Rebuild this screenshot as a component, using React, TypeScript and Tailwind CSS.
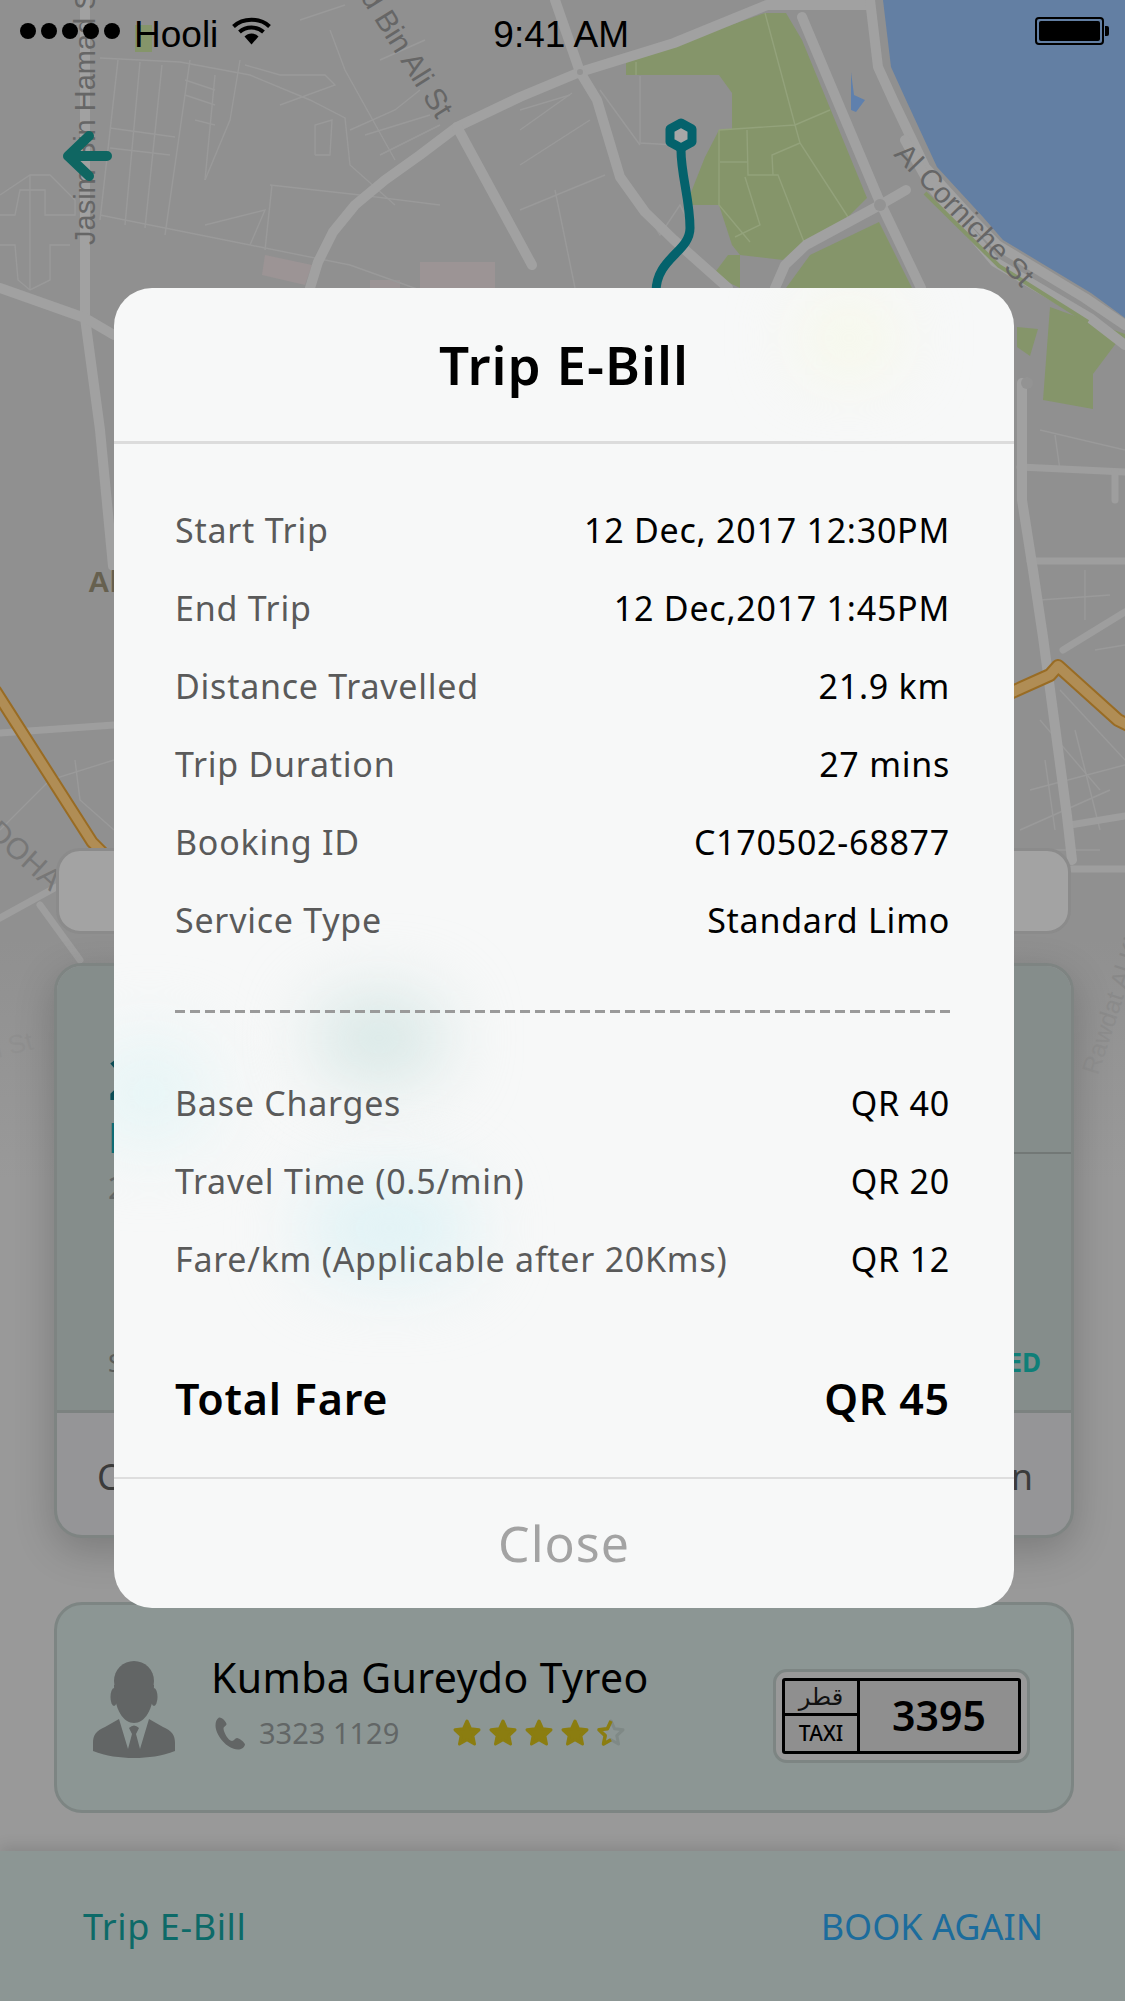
/* ── Map backdrop ───────────────────────────────────────────── */

const ROADS = [
  '85,0 85,270 85,318 100,430 113,566',
  '0,288 85,318 114,335',
  '310,288 318,262 333,232 355,205 385,180 420,155 457,127 520,97 580,72 674,43 767,5 867,5',
  '580,72 555,0',
  '580,72 597,100 620,177 645,212 674,240 728,288',
  '457,127 532,265',
  '802,17 879,200 921,288',
  '880,205 806,245 785,265 775,288',
  '880,205 906,190',
  '870,0 878,67 893,100 925,167 975,222 997,245 1085,298 1125,325',
  '905,140 930,185 995,262 1090,318 1125,345',
  '1022,383 1022,500 1033,570 1043,637 1067,816 1072,860',
];

const MINOR_ROADS = [
  '1020,467 1125,472',
  '1115,472 1115,500',
  '1030,561 1125,561',
  '1063,650 1125,612',
  '1070,825 1125,816',
  '1072,869 1125,869',
  '0,733 114,725',
  '0,918 60,885 114,870',
  '40,905 80,960',
];

const STREETS = [
  '100,58 180,62 250,75 310,100 345,118 350,165 395,205',
  '118,60 100,220',
  '140,62 125,225',
  '162,65 145,228',
  '190,60 165,235',
  '110,128 175,137',
  '110,148 170,155',
  '185,80 215,90',
  '185,95 215,105',
  '195,120 215,125',
  '215,75 205,180',
  '240,60 230,120 205,180',
  '100,215 150,225 250,245 350,265 420,290',
  '270,185 360,195 440,205',
  '272,185 265,250',
  '205,225 265,210 250,245',
  '245,65 280,75 325,75 335,85 280,105',
  '330,30 345,70 370,115 395,160',
  '315,155 330,155 332,120 315,125 315,155',
  '350,130 395,110 420,90',
  '365,135 430,115',
  '380,155 440,125',
  '380,60 425,40',
  '300,20 345,5',
  '0,195 30,175 50,175 75,200 75,215 45,215 45,190 20,190 15,215 0,215',
  '30,175 30,290',
  '0,245 15,245 18,280 30,290 50,280 50,245 70,245',
  '520,130 572,93',
  '520,165 590,120',
  '520,210 605,175',
  '520,110 570,95',
  '555,190 575,288',
  '620,170 660,235 680,205 690,225',
  '600,90 640,145',
  '640,76 640,143 675,145',
  '1040,430 1125,450',
  '1055,435 1060,470',
  '1085,570 1085,620',
  '1040,600 1110,595',
  '1095,650 1125,645',
  '1060,690 1125,760',
  '1040,720 1100,790',
  '1030,790 1125,765',
  '1020,830 1110,790',
  '1045,760 1055,830',
  '1075,730 1100,830',
  '0,830 50,780 114,760',
  '75,760 80,800 114,830',
  '1020,850 1100,850',
];

const PARK_LINES = [
  '765,13 795,125 800,143 848,217',
  '719,130 795,125 830,110',
  '719,130 719,205 750,242',
  '747,130 748,175 778,175 804,242',
  '720,162 747,162',
  '745,177 760,225 735,237',
  '800,143 772,155 773,175',
  '636,62 636,75',
];

const MapBackdrop = () => (
  <svg className="absolute inset-0" width="1125" height="2001" viewBox="0 0 1125 2001">
    <defs>
      <linearGradient id="mapFade" x1="0" y1="0" x2="0" y2="1">
        <stop offset="0" stopColor="#999999" stopOpacity="0" />
        <stop offset="1" stopColor="#999999" />
      </linearGradient>
    </defs>
    <rect width="1125" height="2001" fill="#909090" />
    <polygon points="883,0 891,67 906,100 937,167 983,217 1003,240 1091,293 1125,318 1125,0" fill="#637fa3" />
    <g fill="#85956a">
      <polygon points="626,62 765,13 786,13 802,40 867,198 848,217 804,242 783,260 740,255 732,245 719,205 686,205 705,157 719,130 732,130 732,93 719,75 636,75 626,75" />
      <polygon points="879,222 912,288 786,288 810,255" />
      <polygon points="740,255 740,288 713,275 728,255" />
      <polygon points="1050,307 1125,334 1125,347 1117,342 1093,374 1093,409 1043,400" />
      <polygon points="1017,327 1038,329 1030,356 1017,347" />
      <polygon points="135,25 152,25 152,52 135,52" />
    </g>
    <g fill="#9c9495">
      <polygon points="265,255 312,265 305,285 262,275" />
      <polygon points="420,262 495,262 495,288 420,288" />
      <polygon points="370,280 400,280 400,288 370,288" />
    </g>
    <polygon points="851,72 854,95 865,100 856,112 851,110" fill="#5f80ad" />
    {STREETS.map((points) => (
      <polyline key={points} points={points} fill="none" stroke="#9a9a9a" strokeWidth="1.4" />
    ))}
    {PARK_LINES.map((points) => (
      <polyline key={points} points={points} fill="none" stroke="#93a27b" strokeWidth="1.4" />
    ))}
    {MINOR_ROADS.map((points) => (
      <polyline key={points} points={points} fill="none" stroke="#9e9e9e" strokeWidth="7" strokeLinecap="round" strokeLinejoin="round" />
    ))}
    {ROADS.map((points) => (
      <polyline key={points} points={points} fill="none" stroke="#a1a1a1" strokeWidth="10" strokeLinecap="round" strokeLinejoin="round" />
    ))}
    <polyline points="925,193 999,266 1088,322" fill="none" stroke="#85956a" strokeWidth="4" />
    <circle cx="880" cy="205" r="6" fill="#939393" />
    <circle cx="580" cy="72" r="3" fill="#939393" />
    <circle cx="1027" cy="383" r="6" fill="#939393" />

    {/* highway */}
    <polyline points="1010,693 1050,675 1058,666 1118,720 1130,726" fill="none" stroke="#996c24" strokeWidth="14" strokeLinejoin="round" />
    <polyline points="1010,693 1050,675 1058,666 1118,720 1130,726" fill="none" stroke="#b08d55" strokeWidth="10" strokeLinejoin="round" />
    <polyline points="-5,690 92,842 104,854" fill="none" stroke="#996c24" strokeWidth="13" />
    <polyline points="-5,690 92,842 104,854" fill="none" stroke="#b08d55" strokeWidth="9" />

    {/* street labels */}
    <g fontFamily="'Liberation Sans', sans-serif" fill="#666666">
      <text x="95" y="245" fontSize="29" transform="rotate(-90 95 245)">Jasim Bin Hamad St</text>
      <text x="437" y="120" fontSize="30" textAnchor="end" transform="rotate(58 437 120)">Hamad Bin Ali St</text>
      <text x="893" y="155" fontSize="29" transform="rotate(46 893 155)">Al Corniche St</text>
    </g>
    <text x="88" y="592" fontFamily="'Liberation Sans', sans-serif" fontSize="30" fontWeight="700" fill="#66604f">Al Sadd</text>
    <text x="-14" y="834" transform="rotate(42 -14 834)" fontFamily="'Liberation Sans', sans-serif" fontSize="30" fill="#777777">DOHA</text>
    <text x="1098" y="1076" transform="rotate(-72 1098 1076)" fontFamily="'Liberation Sans', sans-serif" fontSize="25" fill="#858585">Rawdat Al Khail St</text>
    <text x="-2" y="1058" transform="rotate(-14 -2 1058)" fontFamily="'Liberation Sans', sans-serif" fontSize="26" fill="#888888">i St</text>

    <rect y="940" width="1125" height="240" fill="url(#mapFade)" />
    <rect y="1180" width="1125" height="821" fill="#999999" />

    {/* trip route */}
    <path d="M681 150 C681 175 690 200 690 228 C690 252 656 258 656 292" fill="none" stroke="#04626c" strokeWidth="9" />
    <polygon points="681,123 692,129 692,142 681,148 670,142 670,129" fill="#a7a7a7" stroke="#04626c" strokeWidth="9" strokeLinejoin="round" />
  </svg>
);

/* ── Status bar ─────────────────────────────────────────────── */

const StatusBar = () => (
  <div className="relative flex h-[60px] items-center pl-[20px] pr-[16px] pt-[8px] text-[37px] text-black">
    <div className="mb-[6px] flex gap-[5px]">
      {[0, 1, 2, 3, 4].map((dot) => (
        <span key={dot} className="size-[16px] rounded-full bg-black" />
      ))}
    </div>
    <span className="ml-[14px] leading-none">Hooli</span>
    <svg className="ml-[14px] mb-[6px]" width="39" height="28" viewBox="0 0 39 28">
      <path d="M1.5 9.5C11 .5 28 .5 37.5 9.5" fill="none" stroke="#000" strokeWidth="4" />
      <path d="M7.5 15C14 9 25 9 31.5 15" fill="none" stroke="#000" strokeWidth="4" />
      <path d="M12.5 19.5C16.5 15.5 22.5 15.5 26.5 19.5L19.5 27.5Z" fill="#000" />
    </svg>
    <span className="ml-[222px] leading-none">9:41 AM</span>
    <div className="ml-auto mb-[6px] flex items-center gap-[1px]">
      <div className="h-[28px] w-[69px] rounded-[4px] border-2 border-black p-[2px]">
        <div className="size-full rounded-[2px] bg-black" />
      </div>
      <div className="h-[10px] w-[4px] rounded-r-[2px] bg-black" />
    </div>
  </div>
);

/* ── Cards behind the dialog ────────────────────────────────── */

const STAR_PATH = 'M15 3l3.600 7.800 8.400 1-6.200 5.800 1.700 8.400-7.500-4.200-7.500 4.200 1.700-8.400L3 11.800l8.400-1z';

const StarIcon = ({ half }: { half?: boolean }) => {
  if (!half) {
    return (
      <svg width="30" height="30" viewBox="0 0 30 30">
        <path d={STAR_PATH} fill="#8b7d10" stroke="#8b7d10" strokeWidth="3" strokeLinejoin="round" />
      </svg>
    );
  }
  return (
    <svg width="30" height="30" viewBox="0 0 30 30">
      <path d={STAR_PATH} fill="none" stroke="#7f8986" strokeWidth="3" strokeLinejoin="round" />
      <path d="M15 3l-3.600 7.800-8.400 1 6.200 5.800-1.700 8.400 7.500-4.200" fill="none" stroke="#8b7d10" strokeWidth="3.500" strokeLinejoin="round" />
    </svg>
  );
};

const PersonIcon = () => (
  <svg width="84" height="98" viewBox="0 0 84 98" fill="#626565">
    <ellipse cx="42" cy="20" rx="20" ry="20" />
    <path d="M22 24C22 50 32 62 42 62S62 50 62 24Z" />
    <ellipse cx="22" cy="36" rx="3.500" ry="9" />
    <ellipse cx="62" cy="36" rx="3.500" ry="9" />
    <path d="M27 58L13 66C4 70 1 74 1 82V90C14 95 28 97 42 97S70 95 83 90V82C83 74 80 70 71 66L57 58L48 88H36Z" />
    <path d="M37 67Q42 62 47 67L44 73L48 88H36L40 73Z" />
  </svg>
);

const PhoneIcon = () => (
  <svg width="30" height="34" viewBox="0 0 30 34" fill="#626565">
    <path d="M4 1.500C1.500 3 .5 6 .5 9.500C.5 19 12 33.500 23 33.500C26 33.500 29.500 31.500 30 28.500C30 26.500 24 22 22 22C20 22 19 25 17 25C13 25 8.500 15.500 8.500 12.500C8.500 10.500 11.500 10 11.500 8C11.500 6 7 1 4 1.500Z" />
  </svg>
);

const TaxiPlate = () => (
  <div className="rounded-[14px] border-[3px] border-[#7d8583] bg-[#999999] p-[6px]">
    <div className="flex h-[76px] w-[239px] rounded-[3px] border-[3px] border-black bg-[#8f8f8f]">
      <div className="flex w-[75px] flex-col border-r-[3px] border-black">
        <span className="flex h-[35px] items-center justify-center border-b-[3px] border-black text-[24px] text-[#111] [font-family:'DejaVu_Sans',sans-serif]">
          قطر
        </span>
        <span className="flex flex-1 items-center justify-center text-[21px] font-medium text-black">TAXI</span>
      </div>
      <span className="flex flex-1 items-center justify-center text-[41px] font-semibold text-black">3395</span>
    </div>
  </div>
);

/* ── Bill dialog ────────────────────────────────────────────── */

const TRIP_ROWS = [
  ['Start Trip', '12 Dec, 2017 12:30PM'],
  ['End Trip', '12 Dec,2017 1:45PM'],
  ['Distance Travelled', '21.9 km'],
  ['Trip Duration', '27 mins'],
  ['Booking ID', 'C170502-68877'],
  ['Service Type', 'Standard Limo'],
];

const FARE_ROWS = [
  ['Base Charges', 'QR 40'],
  ['Travel Time (0.5/min)', 'QR 20'],
  ['Fare/km (Applicable after 20Kms)', 'QR 12'],
];

const BillRows = ({ rows }: { rows: string[][] }) => (
  <>
    {rows.map(([label, value]) => (
      <div key={label} className="flex h-[78px] items-center justify-between text-[34px] tracking-[0.75px]">
        <span className="text-[#5a5a5a]">{label}</span>
        <span className="text-black">{value}</span>
      </div>
    ))}
  </>
);

const BillDialog = () => (
  <div className="absolute left-[114px] top-[288px] flex h-[1320px] w-[900px] flex-col overflow-hidden rounded-[38px] bg-[#f7f8f8]">
    {/* frosted tint from the cards underneath */}
    <div className="absolute left-[200px] top-[710px] h-[80px] w-[130px] rounded-full bg-[#d3e5e3] blur-[36px]" />
    <div className="absolute left-[-30px] top-[750px] h-[110px] w-[130px] rounded-full bg-[#e6f5f6] blur-[36px]" />
    <div className="absolute left-[190px] top-[890px] h-[100px] w-[170px] rounded-full bg-[#dff2f5] blur-[36px]" />
    <div className="absolute left-[690px] top-[20px] h-[60px] w-[90px] rounded-full bg-[#f7f9e2] blur-[36px]" />

    <div className="relative flex h-[156px] shrink-0 items-center justify-center border-b-[3px] border-[#dcdcdc] text-[53px] font-semibold tracking-[1px] text-black">
      Trip E-Bill
    </div>
    <div className="relative flex flex-1 flex-col pl-[61px] pr-[64px] pt-[47px]">
      <BillRows rows={TRIP_ROWS} />
      <div className="mb-[51px] mt-[51px] h-[3px] bg-[repeating-linear-gradient(90deg,#9a9a9a_0,#9a9a9a_10px,transparent_10px,transparent_15px)]" />
      <BillRows rows={FARE_ROWS} />
      <div className="mt-[61px] flex items-center justify-between text-[43px] font-semibold leading-[80px] tracking-[0.8px] text-black">
        <span>Total Fare</span>
        <span>QR 45</span>
      </div>
    </div>
    <div className="relative flex h-[131px] shrink-0 items-center justify-center border-t-2 border-[#dedede] text-[50px] tracking-[1px] text-[#a3a3a3]">
      Close
    </div>
  </div>
);

/* ── Page ───────────────────────────────────────────────────── */

export default function App() {
  return (
    <div className="relative flex h-[2001px] w-[1125px] flex-col overflow-hidden bg-[#999999] [font-family:'Noto_Sans',sans-serif]">
      <MapBackdrop />
      <div className="relative [font-family:'Liberation_Sans',sans-serif]">
        <StatusBar />
      </div>

      <svg className="relative ml-[60px] mt-[68px]" width="54" height="56" viewBox="0 0 54 56">
        <path d="M47 28H12M29 8L8 28L29 48" fill="none" stroke="#0f6662" strokeWidth="10" strokeLinecap="round" strokeLinejoin="round" />
      </svg>

      {/* search pill */}
      <div className="relative ml-[56px] mr-[54px] mt-[664px] h-[86px] shrink-0 rounded-[24px] border-[3px] border-[#8b8b8b] bg-[#a3a3a3]" />

      {/* trip card */}
      <div className="relative ml-[54px] mr-[51px] mt-[29px] flex h-[575px] shrink-0 flex-col overflow-hidden rounded-[28px] border-[3px] border-[#7e8482] bg-[#959597] shadow-[0_12px_40px_rgba(0,0,0,0.2)]">
        <div className="flex h-[447px] flex-col border-b-[3px] border-[#7c8280] bg-[#858d8b] pl-[51px] pr-[30px]">
          <div className="flex">
            <div className="flex w-[310px] flex-col">
              <span className="mt-[76px] text-[60px] font-bold leading-[70px] text-[#0a4c55]">21 Dec</span>
              <span className="text-[42px] font-bold leading-[50px] text-[#0d6c75]">Doha</span>
              <span className="mt-[6px] text-[30px] leading-[40px] text-[#626666]">2 km</span>
            </div>
            <div className="mr-[-30px] h-[188px] flex-1 border-b-2 border-[#727876]" />
          </div>
          <div className="mb-[30px] mt-auto flex items-center justify-between text-[26px] leading-[36px]">
            <span className="text-[#5a5e5c]">Status</span>
            <span className="font-bold text-[#0f7f78]">COMPLETED</span>
          </div>
        </div>
        <div className="flex flex-1 items-center justify-between pl-[40px] pr-[38px] pt-[6px] text-[36px] text-[#3b3b3b]">
          <span>Contact</span>
          <span>Complain</span>
        </div>
      </div>

      {/* driver card */}
      <div className="relative ml-[54px] mr-[51px] mt-[64px] flex h-[211px] shrink-0 items-start rounded-[28px] border-[3px] border-[#7d8583] bg-[#8c9694] pl-[35px] pr-[41px] pt-[56px]">
        <PersonIcon />
        <div className="ml-[35px] flex flex-col">
          <span className="mt-[-9px] text-[41px] leading-[50px] tracking-[0.4px] text-black">Kumba Gureydo Tyreo</span>
          <div className="mt-[9px] flex items-center">
            <span className="ml-[4px]">
              <PhoneIcon />
            </span>
            <span className="ml-[14px] w-[193px] text-[29px] text-[#626666]">3323 1129</span>
            <div className="flex gap-[6px]">
              {[0, 1, 2, 3].map((star) => (
                <StarIcon key={star} />
              ))}
              <StarIcon half />
            </div>
          </div>
        </div>
        <div className="ml-auto mt-[8px]">
          <TaxiPlate />
        </div>
      </div>

      {/* bottom actions */}
      <div className="relative mt-auto flex h-[150px] shrink-0 items-center justify-between bg-[#8c9694] pl-[83px] pr-[82px] pt-[2px] text-[36px] shadow-[0_-4px_14px_rgba(0,0,0,0.12)]">
        <span className="tracking-[0.6px] text-[#0d6a68]">Trip E-Bill</span>
        <span className="text-[#1c6c9c]">BOOK AGAIN</span>
      </div>

      <BillDialog />
    </div>
  );
}
